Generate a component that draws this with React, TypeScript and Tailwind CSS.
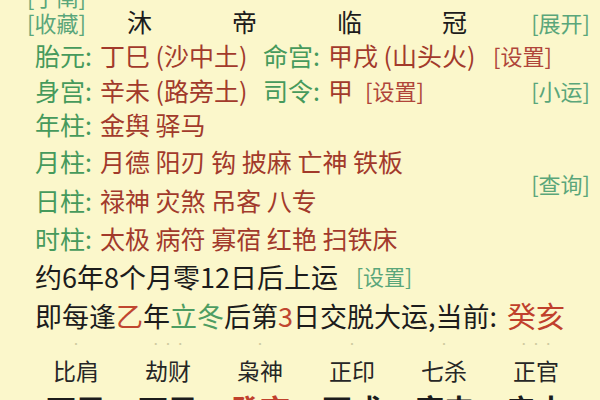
import React from 'react';

const label = 'text-[#469a5c]';
const val = 'text-[#a23a2b]';
const btn = 'text-[22px] text-[#5aa67a]';

export default function App() {
    return (
        <div className="w-[600px] h-[400px] overflow-hidden bg-[#fbf7cb] font-['Noto_Sans_CJK_SC','Noto_Sans',sans-serif] text-[25px] leading-none text-[#1c1c1c]">
            {/* cut-off top row */}
            <div className="-mt-[14px] h-[20px] flex items-center pl-[27px]">
                <span className={btn}>[子阐]</span>
            </div>

            {/* 收藏 / 沐帝临冠 / 展开 */}
            <div className="h-[31px] flex items-center pl-[27px] pr-[10px]">
                <span className={`${btn} w-[60px]`}>[收藏]</span>
                <span className="w-[105px] text-center text-[25px]">沐</span>
                <span className="w-[105px] text-center text-[25px]">帝</span>
                <span className="w-[105px] text-center text-[25px]">临</span>
                <span className="w-[105px] text-center text-[25px]">冠</span>
                <span className={`${btn} ml-auto`}>[展开]</span>
            </div>

            <div className="h-[36px] flex items-center pl-[35px]">
                <span className={`${label} w-[65px]`}>胎元:</span>
                <span className={`${val} w-[163px]`}>丁巳 (沙中土)</span>
                <span className={`${label} w-[65px]`}>命宫:</span>
                <span className={`${val} w-[165px]`}>甲戌 (山头火)</span>
                <span className="text-[22px] text-[#b0453a]">[设置]</span>
            </div>

            <div className="h-[34px] flex items-center pl-[35px] pr-[10px]">
                <span className={`${label} w-[65px]`}>身宫:</span>
                <span className={`${val} w-[163px]`}>辛未 (路旁土)</span>
                <span className={`${label} w-[65px]`}>司令:</span>
                <span className={`${val} w-[37px]`}>甲</span>
                <span className="text-[22px] text-[#b0453a]">[设置]</span>
                <span className={`${btn} ml-auto`}>[小运]</span>
            </div>

            <div className="h-[34px] flex items-center pl-[35px]">
                <span className={`${label} w-[65px]`}>年柱:</span>
                <span className={val}>金舆 驿马</span>
            </div>

            <div className="flex pr-[10px]">
                <div className="flex flex-col">
                    <div className="h-[40px] flex items-center pl-[35px]">
                        <span className={`${label} w-[65px]`}>月柱:</span>
                        <span className={val}>月德 阳刃 钩 披麻 亡神 铁板</span>
                    </div>
                    <div className="h-[38px] flex items-center pl-[35px]">
                        <span className={`${label} w-[65px]`}>日柱:</span>
                        <span className={val}>禄神 灾煞 吊客 八专</span>
                    </div>
                </div>
                <div className="ml-auto flex items-center pt-[6px]">
                    <span className={btn}>[查询]</span>
                </div>
            </div>

            <div className="h-[38px] flex items-center pl-[35px]">
                <span className={`${label} w-[65px]`}>时柱:</span>
                <span className={val}>太极 病符 寡宿 红艳 扫铁床</span>
            </div>

            <div className="h-[38px] flex items-center pl-[35px]">
                <span className="text-[27px]">约6年8个月零12日后上运</span>
                <span className="ml-[18px] text-[21px] text-[#5aa67a]">[设置]</span>
            </div>

            <div className="h-[40px] flex items-center pl-[35px] text-[27px]">
                <span>即每逢</span>
                <span className="text-[#c0462f]">乙</span>
                <span>年</span>
                <span className="text-[#4e9d62]">立冬</span>
                <span>后第</span>
                <span className="text-[#c0462f]">3</span>
                <span>日交脱大运,当前:</span>
                <span className="ml-[10px] text-[29px] text-[#c0402c]">癸亥</span>
            </div>

            <div className="h-[18px] flex items-center pl-[30px] text-[10px] text-[#cfcaa0]">
                <span className="w-[92px] text-center">·</span>
                <span className="w-[92px] text-center">· · ·</span>
                <span className="w-[92px] text-center">·</span>
                <span className="w-[92px] text-center">·</span>
                <span className="w-[92px] text-center">·</span>
                <span className="w-[92px] text-center">· · ·</span>
            </div>

            <div className="h-[34px] flex items-center pl-[30px] text-[23px] text-[#262626]">
                <span className="w-[92px] text-center">比肩</span>
                <span className="w-[92px] text-center">劫财</span>
                <span className="w-[92px] text-center">枭神</span>
                <span className="w-[92px] text-center">正印</span>
                <span className="w-[92px] text-center">七杀</span>
                <span className="w-[92px] text-center">正官</span>
            </div>

            <div className="pt-[6px] flex pl-[30px] text-[30px] font-bold">
                <span className="w-[92px] text-center">丁巳</span>
                <span className="w-[92px] text-center">丁巳</span>
                <span className="w-[92px] text-center text-[#c0402c]">癸亥</span>
                <span className="w-[92px] text-center">丙戌</span>
                <span className="w-[92px] text-center">庚申</span>
                <span className="w-[92px] text-center">辛未</span>
            </div>
        </div>
    );
}
